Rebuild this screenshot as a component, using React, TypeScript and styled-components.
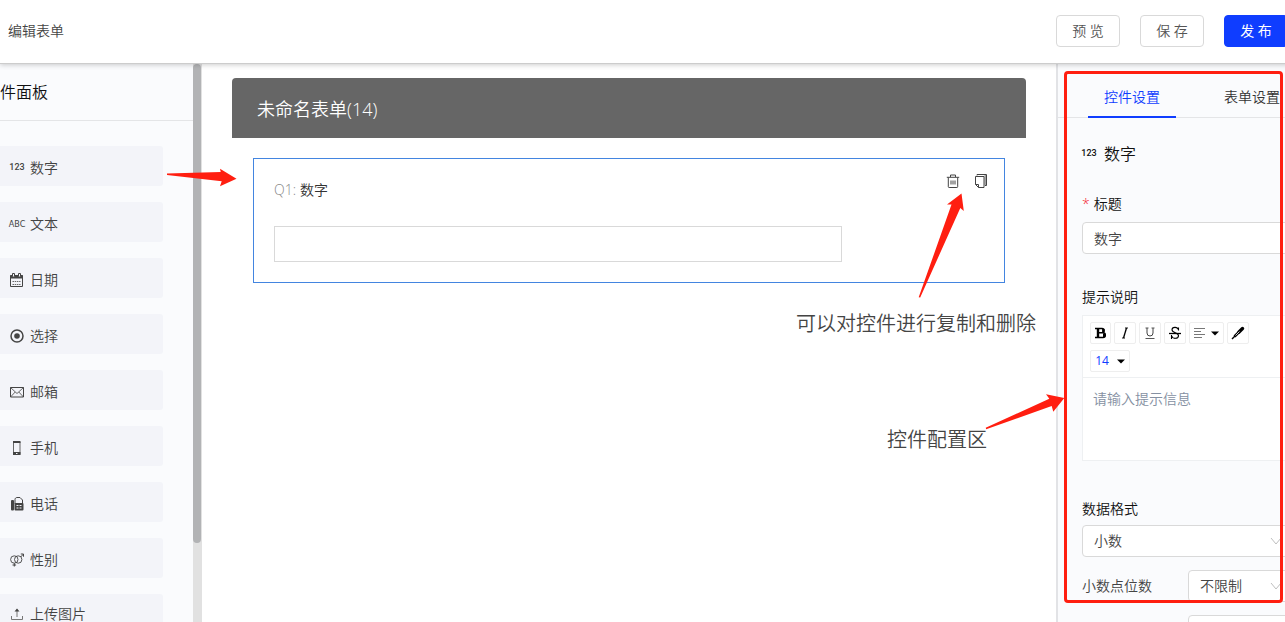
import React from 'react';
import styled, { createGlobalStyle, css } from 'styled-components';

const BLUE = '#0f3dff';
const RED = '#ff1e10';

const GlobalStyle = createGlobalStyle`
  * { box-sizing: border-box; }
  body { margin: 0; background: #fff; }
  body, button, input, select, textarea {
    font-family: "Open Sans", "Noto Sans CJK SC", sans-serif;
    font-size: 14px;
    font-weight: 350;
    line-height: 20px;
    color: #444;
  }
  h1, h2, h3, p { margin: 0; font-weight: 350; }
`;

const Viewport = styled.div`
  position: relative;
  height: 100vh;
  overflow: hidden;
`;

/* The editor is slightly wider than the window and clipped at the right edge. */
const Shell = styled.div`
  display: flex;
  flex-direction: column;
  width: calc(100% + 35px);
  height: 100%;
`;

const Header = styled.header`
  position: relative;
  z-index: 1;
  flex: none;
  display: flex;
  align-items: center;
  justify-content: space-between;
  height: 64px;
  padding: 0 32px 2px 8px;
  background: #fff;
  border-bottom: 1px solid #ccc;
  box-shadow: 0 1px 5px rgba(0, 0, 0, 0.2);
`;

const PageName = styled.h1`
  font-size: 14px;
  line-height: 20px;
`;

const Actions = styled.div`
  display: flex;
  gap: 20px;
`;

const ActionButton = styled.button<{ $primary?: boolean }>`
  width: 64px;
  height: 32px;
  padding: 0;
  border: 1px solid #d9d9d9;
  border-radius: 4px;
  background: #fff;
  color: #555;
  ${p => p.$primary && css`
    background: ${BLUE};
    border-color: ${BLUE};
    color: #fff;
    font-weight: 400;
  `}
`;

const Body = styled.div`
  flex: 1;
  min-height: 0;
  display: flex;
`;

const Palette = styled.aside`
  flex: none;
  display: flex;
  width: 202px;
  background: #fafbfd;
`;

const PaletteContent = styled.div`
  flex: 1;
  overflow: hidden;
`;

const PaletteTitle = styled.h2`
  height: 57px;
  padding: 16px 0;
  border-bottom: 1px solid #e4e5e7;
  font-size: 16px;
  line-height: 24px;
  color: #111;
`;

const PaletteList = styled.ul`
  display: flex;
  flex-direction: column;
  gap: 16px;
  margin: 25px 30px 0 0;
  padding: 0;
  list-style: none;
`;

const PaletteItem = styled.button<{ $compact?: boolean }>`
  display: flex;
  align-items: center;
  gap: 6px;
  width: 100%;
  height: ${p => (p.$compact ? 36 : 40)}px;
  padding: 4px 10px 0;
  border: 0;
  border-radius: 0 3px 3px 0;
  background: #f3f4f9;
`;

const IconBox = styled.span`
  flex: none;
  display: flex;
  align-items: center;
  justify-content: center;
  width: 14px;
  height: 14px;
  svg { display: block; }
`;

const DigitsGlyph = styled.span`
  padding-bottom: 2px;
  font: 500 9px/12px Roboto, sans-serif;
`;

const LettersGlyph = styled.span`
  font: 400 9px/14px "Liberation Sans Narrow", "DejaVu Sans Condensed", sans-serif;
`;

const ScrollTrack = styled.div`
  width: 9px;
  background: #e1e1e1;
`;

const ScrollThumb = styled.div`
  width: 8px;
  height: 479px;
  border-radius: 4px;
  background: #b2b3b5;
`;

const Canvas = styled.main`
  flex: 1;
  min-width: 0;
  padding: 14px 30px;
  background: #fff;
`;

const FormTitle = styled.h2`
  padding: 17px 25px 15px;
  border-radius: 4px 4px 0 0;
  background: #666;
  color: #fff;
  font-size: 18px;
  line-height: 28px;
`;

const QuestionCard = styled.section`
  margin: 20px 21px 0;
  padding: 21px 20px 20px;
  border: 1px solid #4385e0;
`;

const QuestionHead = styled.div`
  display: flex;
  justify-content: space-between;
  align-items: flex-start;
  margin-bottom: 26px;
`;

const QuestionLabel = styled.label`
  color: #333;
`;

const QuestionIndex = styled.span`
  margin-right: 4px;
  color: #888;
`;

const CardTools = styled.div`
  display: flex;
  gap: 14px;
  margin: -6px -4px 0 0;
`;

const ToolButton = styled.button`
  display: flex;
  padding: 0;
  border: 0;
  background: none;
`;

const AnswerInput = styled.input`
  display: block;
  width: 80%;
  height: 36px;
  padding: 0 12px;
  border: 1px solid #d9d9d9;
`;

const Settings = styled.aside`
  flex: none;
  width: 264px;
  overflow: hidden;
  border-left: 2px solid #e2e3e6;
  background: #fafbfd;
`;

const Tabs = styled.div`
  display: flex;
  gap: 32px;
  height: 54px;
  padding-left: 30px;
  border-bottom: 1px solid #e4e5e7;
`;

const Tab = styled.button<{ $active?: boolean }>`
  flex: none;
  height: 54px;
  padding: 14px 16px 0;
  border: 0;
  border-bottom: 2px solid ${p => (p.$active ? BLUE : 'transparent')};
  background: none;
  color: ${p => (p.$active ? BLUE : '#333')};
`;

const SettingsForm = styled.form`
  padding: 24px 24px 0;
`;

const ControlTitle = styled.h3`
  display: flex;
  align-items: center;
  gap: 8px;
  margin-bottom: 28px;
  color: #111;
  font-size: 16px;
  line-height: 24px;
`;

const Field = styled.div<{ $gap: number; $tight?: boolean }>`
  display: flex;
  flex-direction: column;
  gap: ${p => (p.$tight ? 6 : 8)}px;
  margin-bottom: ${p => p.$gap}px;
`;

const FieldLabel = styled.label`
  color: #111;
`;

const Required = styled.span`
  margin-right: 4px;
  color: #f5222d;
`;

const controlBox = css`
  width: 100%;
  height: 32px;
  padding: 0 11px;
  border: 1px solid #d9d9d9;
  border-radius: 4px;
  background: #fff;
`;

const TextInput = styled.input`
  ${controlBox}
`;

const SelectWrap = styled.div`
  position: relative;
  flex: 1;
  svg {
    position: absolute;
    top: 12px;
    right: 14px;
    pointer-events: none;
  }
`;

const SelectBox = styled.select`
  ${controlBox}
  display: block;
  appearance: none;
`;

const InlineField = styled.div`
  display: flex;
  align-items: center;
  gap: 36px;
  margin-bottom: 13px;
`;

const SideLabel = styled.label`
  flex: none;
  width: 70px;
`;

const Editor = styled.div`
  border: 1px solid #eef0f2;
  background: #fff;
`;

const Toolbar = styled.div`
  display: flex;
  flex-wrap: wrap;
  gap: 6px 3px;
  padding: 6px 40px 5px 7px;
  border-bottom: 1px solid #eef0f2;
`;

const FormatButton = styled.button<{ $wide?: number }>`
  display: flex;
  align-items: center;
  justify-content: center;
  gap: 6px;
  width: ${p => p.$wide || 22}px;
  height: 22px;
  padding: 0;
  border: 1px solid #eee;
  border-radius: 2px;
  background: #fff;
  color: #000;
`;

const FontSize = styled.span`
  margin-right: 2px;
  color: ${BLUE};
  font-size: 12px;
  font-weight: 400;
`;

const Hint = styled.textarea`
  display: block;
  width: 100%;
  height: 82px;
  padding: 11px 10px;
  border: 0;
  resize: none;
  background: transparent;
  &::placeholder { color: #8590a2; opacity: 1; }
`;

/* Guide marks drawn over the editor. */
const Highlight = styled.div`
  position: absolute;
  z-index: 2;
  top: 71px;
  right: 2px;
  width: 219px;
  height: 532px;
  border: 3px solid ${RED};
  border-radius: 4px;
  pointer-events: none;
`;

const Arrow = styled.svg<{ $top: number; $left?: number; $right?: number }>`
  position: absolute;
  z-index: 2;
  top: ${p => p.$top}px;
  ${p => (p.$left !== undefined ? `left: ${p.$left}px;` : `right: ${p.$right}px;`)}
  fill: ${RED};
  pointer-events: none;
`;

const Note = styled.p<{ $top: number; $right: number }>`
  position: absolute;
  top: ${p => p.$top}px;
  right: ${p => p.$right}px;
  font-size: 20px;
  line-height: 28px;
  white-space: nowrap;
`;

const Svg = ({ children, w = 14, h = 14, sw = 1 }: { children: React.ReactNode; w?: number; h?: number; sw?: number }) => (
  <svg width={w} height={h} viewBox={`0 0 ${w} ${h}`} fill="none" stroke="currentColor" strokeWidth={sw} aria-hidden="true">
    {children}
  </svg>
);

const CalendarIcon = () => (
  <Svg>
    <path d="M.5 2.5h12v11H.5z" />
    <path d="M.5 2h12v3.500H.5z" fill="currentColor" stroke="none" />
    <path d="M2.500 3.500V.5h2v3M8.500 3.500V.5h2v3" fill="#f3f4f9" />
    <path d="M2.500 8.500h8M2.500 11.500h8" strokeDasharray="1.500 .7" strokeWidth=".8" />
  </Svg>
);
const RadioIcon = () => (
  <Svg sw={1.5}>
    <circle cx="7" cy="7" r="6" />
    <circle cx="7" cy="7" r="2.800" fill="currentColor" stroke="none" />
  </Svg>
);
const MailIcon = () => (
  <Svg>
    <path d="M.5 2.500h13v9.500H.5z" />
    <path d="M.5 2.500 7 8.500l6.500-6M.5 12l4.700-5M13.500 12 8.800 7" strokeWidth=".8" />
  </Svg>
);
const MobileIcon = () => (
  <Svg>
    <path d="M3.500 1v12.500h6.500V1z" strokeWidth=".8" />
    <path d="M3 0h7.500v2H3zM3 11h7.500v3H3z" fill="currentColor" stroke="none" />
    <path d="M6 12.500h1.500" stroke="#f3f4f9" />
  </Svg>
);
const FaxIcon = () => (
  <Svg>
    <rect x="1" y="3" width="3" height="10.500" rx="1" fill="currentColor" stroke="none" />
    <path d="M5 7V2.500C5 1.400 5.900.5 7 .5h3L12.500 3v4" />
    <rect x="4.500" y="6" width="9" height="7.500" rx="1" fill="currentColor" stroke="none" />
    <path d="M6.500 8.500h5M6.500 11h5" stroke="#f3f4f9" strokeDasharray="2 1" />
  </Svg>
);
const GenderIcon = () => (
  <Svg>
    <circle cx="4.300" cy="6.500" r="3.700" strokeWidth=".9" />
    <circle cx="8.200" cy="6.500" r="3.700" strokeWidth=".9" />
    <path d="m10.800 3.900 2.500-2.700M10.800 1h2.700v2.700M4.300 10.200v3.300M2.500 12h3.600" />
  </Svg>
);
const UploadIcon = () => (
  <Svg>
    <path d="M1.500 9v3.500h11V9" stroke="#777" />
    <path d="M7 10V2.500" stroke="#777" />
    <path d="M4.500 4.500 7 1.500l2.500 3z" fill="currentColor" stroke="none" />
  </Svg>
);
const TrashIcon = () => (
  <Svg>
    <path d="M.8 3.300h12.400M4.500 3V1h5v2M2.300 3.500v9.200c0 .5.300.8.800.8h7.800c.5 0 .8-.3.800-.8V3.500M5 6.500v4M7 6.500v4M9 6.500v4" />
  </Svg>
);
const CopyIcon = () => (
  <Svg>
    <path d="M3 1.500V.5h9.500v11H11" />
    <path d="M11.500 1v10.500" strokeWidth="2" opacity=".5" />
    <path d="M1.500 2.500h8.500v11H4.500l-3-3z" />
    <path d="M1.500 10.500h3v3" />
  </Svg>
);
const BoldIcon = () => (
  <Svg>
    <path d="M1 2.500h7a2 2 0 0 1 0 4.300H4h5a2.300 2.300 0 0 1 0 4.700H1" strokeWidth="1.400" />
    <path d="M4 2v10M9.300 3v3M10.200 7.500v3.500" strokeWidth="2.400" />
  </Svg>
);
const ItalicIcon = () => (
  <Svg>
    <path d="M7 2h3M4 12h3" strokeWidth=".9" />
    <path d="M8.500 2 5.500 12" strokeWidth="1.300" />
  </Svg>
);
const UnderlineIcon = () => (
  <Svg>
    <g stroke="#444">
      <path d="M2.500 2h3M8.500 2h3M2.500 12.500h9" strokeWidth=".9" />
      <path d="M4 2v5q0 3 3 3t3-3V2" />
    </g>
  </Svg>
);
const StrikeIcon = () => (
  <Svg>
    <path d="M10.500 4.500V1.500M10.200 3.500C9.500.5 4 .8 4 3.700c0 3.600 6.500 2.500 6.500 6 0 3.300-6 3.600-6.700.3M3.500 9v4" strokeWidth="1.100" />
    <path d="M1 7.500h12" strokeWidth="1.300" />
  </Svg>
);
const AlignIcon = () => (
  <Svg w={11} h={12}><path d="M0 1.500h11M0 4.500h7M0 7.500h11M0 10.500h8" stroke="#777" /></Svg>
);
const CaretIcon = () => (
  <svg width="8" height="5" viewBox="0 0 8 5" aria-hidden="true"><path d="M0 .5h8L4 4.500z" /></svg>
);
const BrushIcon = () => (
  <Svg>
    <path d="M11.500 2.500 8 6" strokeWidth="3.400" strokeLinecap="round" />
    <path d="M8 6 3.500 10.500" strokeWidth="2.600" />
    <path d="M4.500 9.500 1 13" strokeWidth="1.500" />
    <path d="m4.500 9.500 4-4" stroke="#fff" strokeWidth=".8" />
  </Svg>
);
const Chevron = () => (
  <Svg w={12} h={8}><path d="m1 1 5 6 5-6" stroke="#bfbfbf" /></Svg>
);

const paletteItems: { label: string; icon: React.ReactNode; compact?: boolean }[] = [
  { label: '数字', icon: <DigitsGlyph>123</DigitsGlyph> },
  { label: '文本', icon: <LettersGlyph>ABC</LettersGlyph> },
  { label: '日期', icon: <CalendarIcon /> },
  { label: '选择', icon: <RadioIcon /> },
  { label: '邮箱', icon: <MailIcon /> },
  { label: '手机', icon: <MobileIcon /> },
  { label: '电话', icon: <FaxIcon /> },
  { label: '性别', icon: <GenderIcon /> },
  { label: '上传图片', icon: <UploadIcon />, compact: true },
];

export default function App() {
  return (
    <Viewport>
      <GlobalStyle />
      <Shell>
        <Header>
          <PageName>编辑表单</PageName>
          <Actions>
            <ActionButton type="button">预 览</ActionButton>
            <ActionButton type="button">保 存</ActionButton>
            <ActionButton type="button" $primary>发 布</ActionButton>
          </Actions>
        </Header>
        <Body>
          <Palette>
            <PaletteContent>
              <PaletteTitle>件面板</PaletteTitle>
              <PaletteList>
                {paletteItems.map(item => (
                  <li key={item.label}>
                    <PaletteItem type="button" $compact={item.compact}>
                      <IconBox>{item.icon}</IconBox>
                      {item.label}
                    </PaletteItem>
                  </li>
                ))}
              </PaletteList>
            </PaletteContent>
            <ScrollTrack><ScrollThumb /></ScrollTrack>
          </Palette>

          <Canvas>
            <FormTitle>未命名表单(14)</FormTitle>
            <QuestionCard>
              <QuestionHead>
                <QuestionLabel htmlFor="q1"><QuestionIndex>Q1:</QuestionIndex>数字</QuestionLabel>
                <CardTools>
                  <ToolButton type="button" aria-label="删除"><TrashIcon /></ToolButton>
                  <ToolButton type="button" aria-label="复制"><CopyIcon /></ToolButton>
                </CardTools>
              </QuestionHead>
              <AnswerInput id="q1" />
            </QuestionCard>
          </Canvas>

          <Settings>
            <Tabs role="tablist">
              <Tab type="button" role="tab" aria-selected="true" $active>控件设置</Tab>
              <Tab type="button" role="tab" aria-selected="false">表单设置</Tab>
            </Tabs>
            <SettingsForm>
              <ControlTitle><IconBox><DigitsGlyph>123</DigitsGlyph></IconBox>数字</ControlTitle>
              <Field $gap={33}>
                <FieldLabel htmlFor="title"><Required>*</Required>标题</FieldLabel>
                <TextInput id="title" defaultValue="数字" />
              </Field>
              <Field $gap={38}>
                <FieldLabel htmlFor="hint">提示说明</FieldLabel>
                <Editor>
                  <Toolbar>
                    <FormatButton type="button" aria-label="加粗" $wide={21}><BoldIcon /></FormatButton>
                    <FormatButton type="button" aria-label="斜体"><ItalicIcon /></FormatButton>
                    <FormatButton type="button" aria-label="下划线"><UnderlineIcon /></FormatButton>
                    <FormatButton type="button" aria-label="删除线"><StrikeIcon /></FormatButton>
                    <FormatButton type="button" aria-label="对齐" $wide={35}><AlignIcon /><CaretIcon /></FormatButton>
                    <FormatButton type="button" aria-label="颜色"><BrushIcon /></FormatButton>
                    <FormatButton type="button" aria-label="字号" $wide={40}><FontSize>14</FontSize><CaretIcon /></FormatButton>
                  </Toolbar>
                  <Hint id="hint" placeholder="请输入提示信息" />
                </Editor>
              </Field>
              <Field $gap={13} $tight>
                <FieldLabel htmlFor="format">数据格式</FieldLabel>
                <SelectWrap>
                  <SelectBox id="format"><option>小数</option></SelectBox>
                  <Chevron />
                </SelectWrap>
              </Field>
              <InlineField>
                <SideLabel htmlFor="digits">小数点位数</SideLabel>
                <SelectWrap>
                  <SelectBox id="digits"><option>不限制</option></SelectBox>
                  <Chevron />
                </SelectWrap>
              </InlineField>
              <InlineField>
                <SideLabel />
                <TextInput aria-label="默认值" />
              </InlineField>
            </SettingsForm>
          </Settings>
        </Body>
      </Shell>

      <Arrow $top={168} $left={166} width="72" height="20" viewBox="166 168 72 20">
        <path d="M167 173.500 220.700 172 220 168.700 236.500 178.700 220 186.200 221.700 181.300 167 175z" />
      </Arrow>
      <Arrow $top={192} $right={319} width="48" height="107" viewBox="918 192 48 107">
        <path d="M918.700 297.300 951.500 204.500 947 204.500 961.500 193.500 963.800 211 960.300 208 920.200 297.500z" />
      </Arrow>
      <Arrow $top={393} $right={220} width="80" height="38" viewBox="985 393 80 38">
        <path d="M985.700 427.700 1049.300 398.700 1046 394.300 1064.300 398 1053.300 411.700 1051.700 406 986.200 429.300z" />
      </Arrow>
      <Note $top={310} $right={249}>可以对控件进行复制和删除</Note>
      <Note $top={426} $right={298}>控件配置区</Note>
      <Highlight />
    </Viewport>
  );
}
